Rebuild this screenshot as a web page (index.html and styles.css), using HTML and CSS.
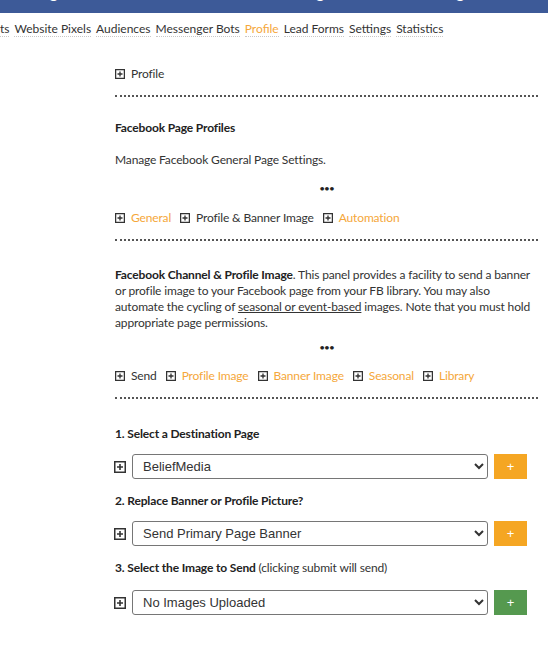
FILE: index.html
```html
<!DOCTYPE html>
<html>
	<head>
		<meta charset="UTF-8">
		<title>Facebook Page Profiles</title>
		<link rel="stylesheet" href="styles.css">
	</head>
	<body>
		<svg class="defs" width="0" height="0">
			<symbol id="plusbox" viewBox="0 0 12 12">
				<rect x="0.75" y="0.75" width="10.5" height="10.5" fill="none" stroke="currentColor" stroke-width="1.5"/>
				<path d="M6 3v6M3 6h6" stroke="currentColor" stroke-width="1.6"/>
			</symbol>
		</svg>

		<div class="titlebar">
			<h1>Manage Your Facebook Business Page Profile Settings and Banner Imagery for any Facebook page</h1>
		</div>

		<nav class="tabs">
			<a href="#">Posts</a>
			<a href="#">Website Pixels</a>
			<a href="#">Audiences</a>
			<a href="#">Messenger Bots</a>
			<a href="#" class="current">Profile</a>
			<a href="#">Lead Forms</a>
			<a href="#">Settings</a>
			<a href="#">Statistics</a>
		</nav>

		<div class="panel">
			<div class="toggles first">
				<span class="toggle"><svg class="ico"><use href="#plusbox"/></svg>Profile</span>
			</div>
			<hr class="dots">

			<h3 class="title">Facebook Page Profiles</h3>
			<p class="lead">Manage Facebook General Page Settings.</p>
			<div class="sep">&bull;&bull;&bull;</div>

			<div class="toggles">
				<span class="toggle on"><svg class="ico"><use href="#plusbox"/></svg>General</span>
				<span class="toggle"><svg class="ico"><use href="#plusbox"/></svg>Profile &amp; Banner Image</span>
				<span class="toggle on"><svg class="ico"><use href="#plusbox"/></svg>Automation</span>
			</div>
			<hr class="dots">

			<p class="intro"><b>Facebook Channel &amp; Profile Image</b>. This panel provides a facility to send a banner or profile image to your Facebook page from your FB library. You may also automate the cycling of <u>seasonal or event-based</u> images. Note that you must hold appropriate page permissions.</p>
			<div class="sep sep2">&bull;&bull;&bull;</div>

			<div class="toggles second">
				<span class="toggle"><svg class="ico"><use href="#plusbox"/></svg>Send</span>
				<span class="toggle on"><svg class="ico"><use href="#plusbox"/></svg>Profile Image</span>
				<span class="toggle on"><svg class="ico"><use href="#plusbox"/></svg>Banner Image</span>
				<span class="toggle on"><svg class="ico"><use href="#plusbox"/></svg>Seasonal</span>
				<span class="toggle on"><svg class="ico"><use href="#plusbox"/></svg>Library</span>
			</div>
			<hr class="dots">

			<form class="sendform">
				<label class="step first">1. Select a Destination Page</label>
				<div class="row">
					<svg class="ico big"><use href="#plusbox"/></svg>
					<select><option>BeliefMedia</option></select>
					<button type="button" class="btn">+</button>
				</div>

				<label class="step">2. Replace Banner or Profile Picture?</label>
				<div class="row">
					<svg class="ico big"><use href="#plusbox"/></svg>
					<select><option>Send Primary Page Banner</option></select>
					<button type="button" class="btn">+</button>
				</div>

				<label class="step">3. Select the Image to Send <span>(clicking submit will send)</span></label>
				<div class="row last">
					<svg class="ico big"><use href="#plusbox"/></svg>
					<select><option>No Images Uploaded</option></select>
					<button type="button" class="btn green">+</button>
				</div>
			</form>
		</div>
	</body>
</html>
```

FILE: styles.css
```css
*{
	margin: 0;
	padding: 0;
	box-sizing: border-box;
}
body{
	font-family: Lato, "Open Sans", sans-serif;
	font-size: 12px;
	line-height: 16px;
	letter-spacing: -0.15px;
	color: #333;
	background: #fff;
	overflow: hidden;
}
.defs{
	position: absolute;
}
.titlebar{
	width: 548px;
	height: 13px;
	background: #3d5a98;
	overflow: hidden;
}
.titlebar h1{
	color: #fff;
	font-size: 17px;
	font-weight: normal;
	line-height: 17px;
	margin-top: -17px;
	white-space: nowrap;
	padding-left: 8px;
	word-spacing: 12px;
}
.tabs{
	display: flex;
	gap: 5px;
	margin: 8px 0 0 -19px;
	white-space: nowrap;
	letter-spacing: 0;
}
.tabs a{
	color: #333;
	text-decoration: none;
	border-bottom: 1px dotted #c8c8c8;
	line-height: 15px;
}
.tabs a.current{
	color: #f5a73a;
}
.panel{
	width: 423px;
	margin-left: 115px;
	padding-top: 29px;
}
.ico{
	width: 10px;
	height: 10px;
	color: #333;
	flex: none;
}
.ico.big{
	width: 12px;
	height: 12px;
}
.toggles{
	display: flex;
	gap: 9px;
	margin-top: 14px;
}
.toggles.first{
	margin-top: 0;
}
.toggles.second{
	margin-top: 13px;
}
.toggle{
	display: flex;
	align-items: center;
	gap: 6px;
}
.toggle.on{
	color: #f5a73a;
}
.dots{
	border: 0;
	border-top: 2px dotted #555;
	height: 0;
	margin-top: 13px;
}
.title{
	font-size: 12px;
	font-weight: bold;
	color: #222;
	margin-top: 23px;
}
.lead{
	margin-top: 16px;
}
.sep{
	text-align: center;
	font-size: 10px;
	letter-spacing: -1px;
	color: #222;
	margin-top: 12px;
}
.intro{
	margin-top: 26px;
}
.intro b{
	color: #222;
}
.sep2{
	margin-top: 8px;
}
.step{
	display: block;
	font-weight: bold;
	color: #222;
	margin-top: 14px;
}
.step.first{
	margin-top: 27px;
}
.step span{
	font-weight: normal;
	color: #333;
}
.row{
	display: flex;
	align-items: center;
	gap: 6px;
	margin-top: 12px;
	margin-left: -1px;
}
.row.last{
	margin-top: 14px;
}
.row select{
	width: 356px;
	height: 25px;
	font-family: "Liberation Sans", Arial, sans-serif;
	font-size: 13px;
	letter-spacing: 0;
	color: #333;
	padding-left: 6px;
	border: 1px solid #767676;
	border-radius: 3px;
	background: #fff;
}
.btn{
	width: 33px;
	height: 25px;
	border: 0;
	background: #f5a623;
	color: #fff;
	font-size: 13px;
	font-family: "Liberation Sans", Arial, sans-serif;
}
.btn.green{
	background: #55994f;
}
```
